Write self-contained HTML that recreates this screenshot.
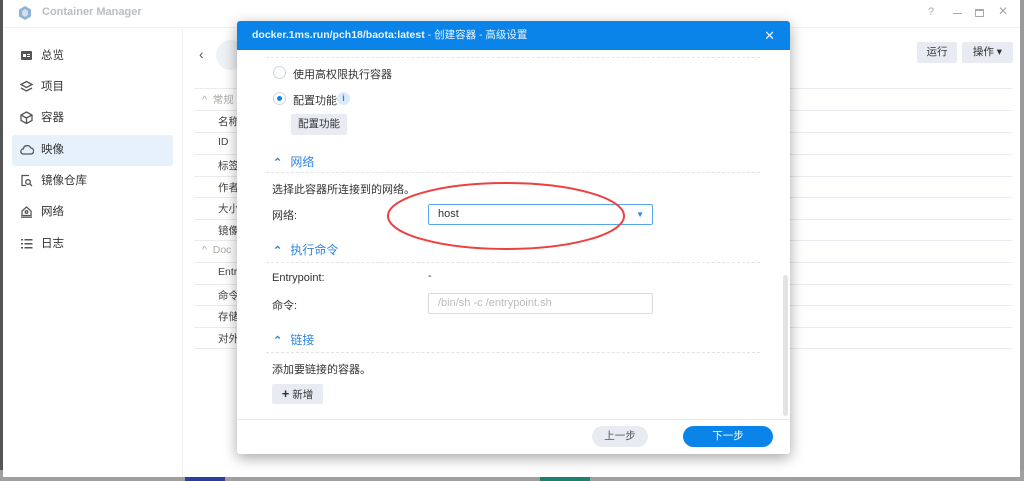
<!DOCTYPE html>
<html><head><meta charset="utf-8"><style>
*{margin:0;padding:0;box-sizing:border-box}
body{width:1024px;height:481px;overflow:hidden;background:#9a9a9a;font-family:"Liberation Sans","Noto Sans CJK SC",sans-serif;font-size:11px;color:#333;position:relative}
.abs{position:absolute}
.win{left:3px;top:0;width:1017px;height:477px;background:#fff}
.side{left:3px;top:28px;width:180px;height:449px;border-right:1px solid #eef0f3}
.si{position:absolute;left:20px;height:20px;line-height:20px;font-size:11.5px;color:#333}
.si svg{position:absolute;left:0;top:3px}
.si span{position:absolute;left:21px;white-space:nowrap}
.row{position:absolute;left:194px;width:818px;border-top:1px solid #e8ecf0}
.rt{position:absolute;left:218px;font-size:10.5px;color:#444}
.dlg{left:237px;top:21px;width:553px;height:433px;background:#fff;border-radius:3px;box-shadow:0 4px 14px rgba(0,0,0,.35);overflow:hidden}
.hd{height:29px;background:#0a84e8;color:#eaf3ff;font-weight:bold;font-size:10.5px;line-height:29px;padding-left:15px}
.dash{position:absolute;left:29px;width:494px;border-top:1px dashed #dfe4ea}
.t{position:absolute;font-size:11px;color:#333;white-space:nowrap}
.sec{position:absolute;color:#2e86de;font-size:12px}
.sec b{display:inline-block;width:14px;font-size:11px}
.btn{position:absolute;background:#e8ecf2;border-radius:2px;text-align:center;color:#333;font-size:10.5px}
.inp{position:absolute;left:191px;width:225px;height:21px;border:1px solid #d6dce3;border-radius:2px;font-size:11px;line-height:19px;padding-left:9px}
</style></head><body>
<div class="abs" style="left:0;top:0;width:3px;height:481px;background:#555"></div>
<div class="abs" style="left:0;top:470px;width:1024px;height:11px;background:#a0a0a0"></div>
<div class="abs" style="left:185px;top:474px;width:40px;height:7px;background:#2a3ea0"></div>
<div class="abs" style="left:540px;top:474px;width:50px;height:7px;background:#1c8070"></div>
<div class="abs win"></div>
<div class="abs" style="left:3px;top:27px;width:1017px;border-top:1px solid #f0f2f4"></div>
<svg class="abs" style="left:17px;top:5px" width="16" height="16" viewBox="0 0 16 16"><polygon points="8,1 14,4.5 14,11.5 8,15 2,11.5 2,4.5" fill="#8fb4d6"/><polygon points="8,4 11,6 11,10 8,12 5,10 5,6" fill="#cfe1f1"/></svg>
<div class="abs" style="left:42px;top:6px;font-size:11px;font-weight:bold;color:#b8bec6">Container Manager</div>
<div class="abs" style="left:928px;top:6px;color:#aaa;font-size:11px">?</div>
<div class="abs" style="left:953px;top:13px;width:9px;border-top:1px solid #aaa"></div>
<div class="abs" style="left:975px;top:9px;width:9px;height:8px;border:1px solid #aaa;border-top-width:2px"></div>
<div class="abs" style="left:998px;top:4px;color:#aaa;font-size:12px">✕</div>
<div class="abs side"></div>
<div class="abs" style="left:12px;top:135px;width:161px;height:31px;background:#e6f1fc;border-radius:3px"></div>
<div class="si" style="top:46px"><svg width="13" height="13"><rect x="1" y="2" width="11" height="9" rx="1" fill="#555"/><rect x="3" y="5" width="3" height="3" fill="#fff"/><rect x="7" y="5" width="3" height="1" fill="#fff"/><rect x="7" y="7" width="3" height="1" fill="#fff"/></svg><span>总览</span></div>
<div class="si" style="top:77px"><svg width="13" height="13" fill="none" stroke="#555" stroke-width="1.3"><path d="M6.5 1.5L12 4.5 6.5 7.5 1 4.5z"/><path d="M1 8l5.5 3 5.5-3"/></svg><span>项目</span></div>
<div class="si" style="top:108px"><svg width="13" height="13" fill="none" stroke="#555" stroke-width="1.3"><path d="M6.5 1L12 4v5.5L6.5 12.5 1 9.5V4z"/><path d="M1 4l5.5 3 5.5-3M6.5 7v5.5"/></svg><span>容器</span></div>
<div class="si" style="top:140px"><svg width="14" height="13" fill="none" stroke="#555" stroke-width="1.3"><path d="M3.5 11h7a3 3 0 0 0 .3-6 4 4 0 0 0-7.6 1A2.5 2.5 0 0 0 3.5 11z"/></svg><span>映像</span></div>
<div class="si" style="top:171px"><svg width="13" height="13" fill="none" stroke="#555" stroke-width="1.3"><path d="M9 1.5H2v10h4"/><circle cx="8" cy="8" r="2.3"/><path d="M9.8 9.8L12 12"/></svg><span>镜像仓库</span></div>
<div class="si" style="top:202px"><svg width="13" height="13" fill="none" stroke="#555" stroke-width="1.3"><path d="M2 6L6.5 2 11 6v4.5H2z"/><circle cx="6.5" cy="7" r="1.3"/><path d="M1 12.2h11"/></svg><span>网络</span></div>
<div class="si" style="top:234px"><svg width="13" height="13" fill="#555"><rect x="1" y="2" width="2" height="1.5"/><rect x="4.5" y="2" width="8" height="1.5"/><rect x="1" y="6" width="2" height="1.5"/><rect x="4.5" y="6" width="8" height="1.5"/><rect x="1" y="10" width="2" height="1.5"/><rect x="4.5" y="10" width="8" height="1.5"/></svg><span>日志</span></div>
<div class="abs" style="left:199px;top:46px;font-size:14px;color:#555">‹</div>
<div class="abs" style="left:216px;top:40px;width:30px;height:30px;border-radius:50%;background:#eef1f5"></div>
<div class="btn" style="left:917px;top:42px;width:40px;height:21px;line-height:21px">运行</div>
<div class="btn" style="left:962px;top:42px;width:51px;height:21px;line-height:21px">操作 ▾</div>
<div class="row" style="top:88px"></div><div class="row" style="top:110px"></div><div class="row" style="top:132px"></div><div class="row" style="top:154px"></div><div class="row" style="top:176px"></div><div class="row" style="top:197px"></div><div class="row" style="top:219px"></div><div class="row" style="top:240px"></div><div class="row" style="top:262px"></div><div class="row" style="top:284px"></div><div class="row" style="top:305px"></div><div class="row" style="top:327px"></div><div class="row" style="top:348px"></div>
<div class="rt" style="top:92px;left:202px;color:#aaa">^ &nbsp;常规</div>
<div class="rt" style="top:114px">名称</div><div class="rt" style="top:136px">ID</div><div class="rt" style="top:158px">标签</div><div class="rt" style="top:180px">作者</div><div class="rt" style="top:201px">大小</div><div class="rt" style="top:223px">镜像</div>
<div class="rt" style="top:244px;left:202px;color:#aaa">^ &nbsp;Doc</div>
<div class="rt" style="top:266px">Entr</div><div class="rt" style="top:288px">命令</div><div class="rt" style="top:309px">存储</div><div class="rt" style="top:331px">对外</div>

<div class="abs dlg">
<div class="hd">docker.1ms.run/pch18/baota:latest <span style="font-weight:normal">- 创建容器 - 高级设置</span><span style="position:absolute;right:15px;font-size:13px;font-weight:normal">✕</span></div>
<div class="dash" style="top:36px"></div>
<div class="abs" style="left:36px;top:45px;width:13px;height:13px;border:1px solid #cfd5dc;border-radius:50%"></div>
<div class="t" style="left:56px;top:45px">使用高权限执行容器</div>
<div class="abs" style="left:36px;top:71px;width:13px;height:13px;border:1px solid #cfd5dc;border-radius:50%"><div style="margin:3px;width:5px;height:5px;border-radius:50%;background:#0a84e8"></div></div>
<div class="t" style="left:56px;top:71px">配置功能</div>
<div class="abs" style="left:100px;top:71px;width:13px;height:13px;border-radius:50%;background:#dcebfa;color:#2e86de;font-size:9px;text-align:center;line-height:13px;font-weight:bold">i</div>
<div class="btn" style="left:54px;top:93px;width:56px;height:21px;line-height:21px">配置功能</div>
<div class="sec" style="left:36px;top:132px"><b>⌃</b> 网络</div>
<div class="dash" style="top:151px"></div>
<div class="t" style="left:35px;top:160px">选择此容器所连接到的网络。</div>
<div class="t" style="left:35px;top:186px">网络:</div>
<div class="inp" style="top:183px;border-color:#5aa6ee;color:#333">host<span style="position:absolute;right:8px;color:#2e86de;font-size:8px">▼</span></div>
<div class="sec" style="left:36px;top:220px"><b>⌃</b> 执行命令</div>
<div class="dash" style="top:241px"></div>
<div class="t" style="left:35px;top:251px">Entrypoint:</div>
<div class="t" style="left:191px;top:249px">-</div>
<div class="t" style="left:35px;top:276px">命令:</div>
<div class="inp" style="top:272px;color:#bbb">/bin/sh -c /entrypoint.sh</div>
<div class="sec" style="left:36px;top:310px"><b>⌃</b> 链接</div>
<div class="dash" style="top:331px"></div>
<div class="t" style="left:35px;top:340px">添加要链接的容器。</div>
<div class="btn" style="left:35px;top:363px;width:51px;height:20px;line-height:20px"><b style="font-size:13px">+</b> 新增</div>
<div class="abs" style="left:546px;top:254px;width:5px;height:141px;background:#e3e3e3;border-radius:3px"></div>
<div class="abs" style="left:0;top:398px;width:553px;border-top:1px solid #e6eaef"></div>
<div class="btn" style="left:355px;top:405px;width:56px;height:21px;line-height:21px;border-radius:11px;color:#555">上一步</div>
<div class="btn" style="left:446px;top:405px;width:90px;height:21px;line-height:21px;border-radius:11px;background:#0a84e8;color:#fff">下一步</div>
</div>
<svg class="abs" style="left:385px;top:180px" width="250" height="80"><ellipse cx="121" cy="36" rx="118" ry="33" fill="none" stroke="#ee4040" stroke-width="2"/></svg>
</body></html>
